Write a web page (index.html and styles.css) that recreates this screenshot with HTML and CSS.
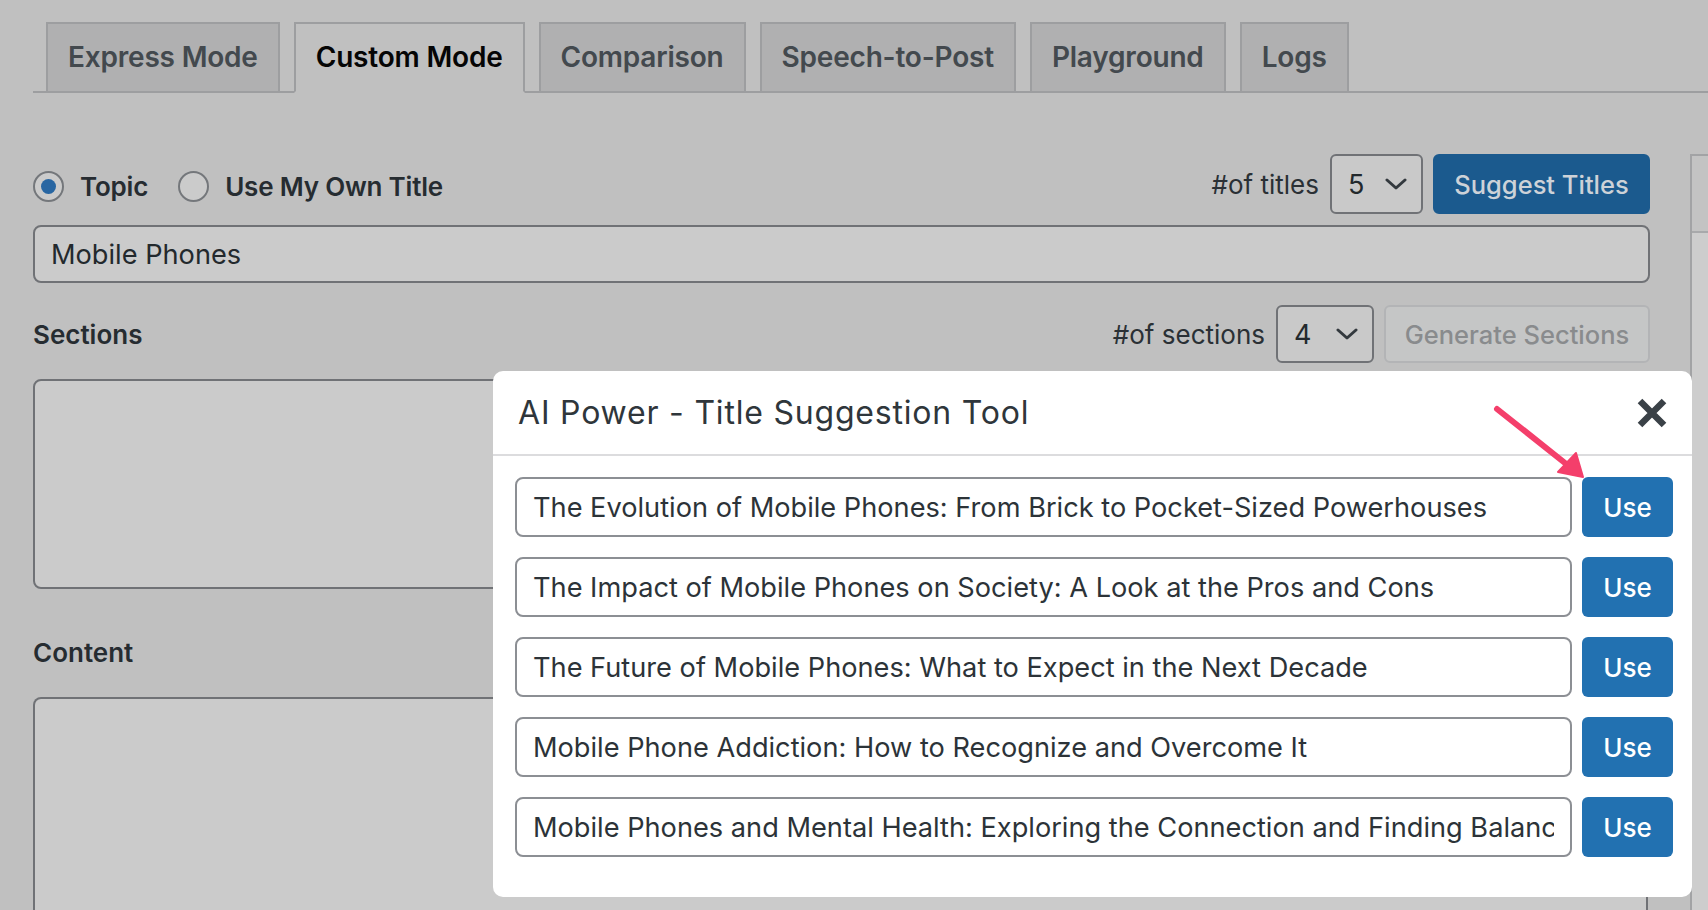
FILE: index.html
```html
<!DOCTYPE html>
<html lang="en">
<head>
<meta charset="utf-8">
<title>AI Power - Custom Mode</title>
<link rel="stylesheet" href="styles.css">
</head>
<body>
<nav class="tabs">
  <a class="tab">Express Mode</a>
  <a class="tab active">Custom Mode</a>
  <a class="tab">Comparison</a>
  <a class="tab">Speech-to-Post</a>
  <a class="tab">Playground</a>
  <a class="tab">Logs</a>
</nav>

<div class="layout">
  <main class="main">
    <div class="row row-title">
      <div class="radios">
        <label class="radio"><span class="radio-dot checked"></span>Topic</label>
        <label class="radio"><span class="radio-dot"></span>Use My Own Title</label>
      </div>
      <div class="controls">
        <span class="ctl-label">#of titles</span>
        <div class="select select-titles"><span>5</span><svg class="chev" viewBox="0 0 22 12" width="22" height="12"><polyline points="2,2 11,10 20,2" fill="none" stroke="#33393e" stroke-width="3" stroke-linecap="round" stroke-linejoin="round"/></svg></div>
        <button class="btn btn-primary btn-suggest">Suggest Titles</button>
      </div>
    </div>

    <div class="field topic-field"><span class="field-text">Mobile Phones</span></div>

    <div class="row row-sections">
      <h3 class="heading">Sections</h3>
      <div class="controls">
        <span class="ctl-label">#of sections</span>
        <div class="select select-sections"><span>4</span><svg class="chev" viewBox="0 0 22 12" width="22" height="12"><polyline points="2,2 11,10 20,2" fill="none" stroke="#33393e" stroke-width="3" stroke-linecap="round" stroke-linejoin="round"/></svg></div>
        <button class="btn btn-disabled btn-generate">Generate Sections</button>
      </div>
    </div>

    <div class="textarea sections-area"></div>

    <div class="row row-content">
      <h3 class="heading">Content</h3>
    </div>

    <div class="textarea content-area"></div>
  </main>

  <aside class="sidebar">
    <div class="sidebar-head"></div>
    <div class="sidebar-body"></div>
  </aside>
</div>

<div class="modal">
  <div class="modal-header">
    <h2 class="modal-title">AI Power - Title Suggestion Tool</h2>
    <svg class="close" viewBox="0 0 32 32" width="32" height="32"><path d="M4 4 L28 28 M28 4 L4 28" stroke="#3a4147" stroke-width="6.5" stroke-linecap="butt" fill="none"/></svg>
  </div>
  <div class="modal-body">
    <div class="title-row">
      <div class="field title-field"><span class="field-text">The Evolution of Mobile Phones: From Brick to Pocket-Sized Powerhouses</span></div>
      <button class="btn btn-use">Use</button>
    </div>
    <div class="title-row">
      <div class="field title-field"><span class="field-text">The Impact of Mobile Phones on Society: A Look at the Pros and Cons</span></div>
      <button class="btn btn-use">Use</button>
    </div>
    <div class="title-row">
      <div class="field title-field"><span class="field-text">The Future of Mobile Phones: What to Expect in the Next Decade</span></div>
      <button class="btn btn-use">Use</button>
    </div>
    <div class="title-row">
      <div class="field title-field"><span class="field-text">Mobile Phone Addiction: How to Recognize and Overcome It</span></div>
      <button class="btn btn-use">Use</button>
    </div>
    <div class="title-row">
      <div class="field title-field"><span class="field-text">Mobile Phones and Mental Health: Exploring the Connection and Finding Balance</span></div>
      <button class="btn btn-use">Use</button>
    </div>
  </div>
</div>

<svg class="arrow" viewBox="0 0 100 84" width="100" height="84">
  <line x1="7" y1="7" x2="80" y2="65" stroke="#f43f6b" stroke-width="6" stroke-linecap="round"/>
  <polygon points="93,75 68,70 86,51" fill="#f43f6b" stroke="#f43f6b" stroke-width="2" stroke-linejoin="round"/>
</svg>
</body>
</html>
```

FILE: styles.css
```css
* { box-sizing: border-box; }

html, body {
  margin: 0;
  padding: 0;
}

body {
  width: 1708px;
  height: 910px;
  overflow: hidden;
  background: #c0c0c0;
  font-family: Inter, "Noto Sans", "Liberation Sans", sans-serif;
  color: #23292d;
  position: relative;
}

/* ---------- tabs ---------- */
.tabs {
  display: flex;
  margin: 22px 0 0 33px;
  padding-left: 13px;
  border-bottom: 2px solid #9d9ea0;
  height: 71px;
}

.tab {
  display: flex;
  align-items: center;
  height: 69px;
  padding: 0 20px 2px;
  margin-right: 14px;
  background: #b0b0b1;
  border: 2px solid #9d9ea0;
  border-bottom: none;
  font-size: 28px;
  font-weight: 600;
  color: #43494e;
  letter-spacing: -0.2px;
}

.tab.active {
  background: #c0c0c0;
  color: #050505;
  height: 71px;
  border-bottom: 2px solid #c0c0c0;
}

/* ---------- layout ---------- */
.layout {
  display: flex;
  margin-top: 61px;
}

.main {
  width: 1617px;
  margin-left: 33px;
  flex-shrink: 0;
}

.sidebar {
  margin-left: 40px;
  width: 18px;
  flex-shrink: 0;
  border: 2px solid #a2a3a5;
  border-right: none;
  border-bottom: none;
  display: flex;
  flex-direction: column;
  height: 756px;
}

.sidebar-head {
  height: 77px;
  background: #c3c3c3;
  border-bottom: 2px solid #a8a9ab;
}

.sidebar-body {
  flex: 1;
  background: #cdcdcd;
}

/* ---------- rows ---------- */
.row {
  display: flex;
  align-items: center;
  justify-content: space-between;
}

.row-title { height: 60px; }
.row-sections { height: 58px; margin-top: 22px; }
.row-content { height: 58px; margin-top: 34px; }

.radios {
  display: flex;
  align-items: center;
  gap: 30px;
  padding-top: 4px;
}

.radio {
  display: flex;
  align-items: center;
  gap: 16px;
  font-size: 26px;
  font-weight: 600;
  color: #262c31;
  letter-spacing: -0.2px;
}

.radio-dot {
  width: 31px;
  height: 31px;
  border-radius: 50%;
  border: 2px solid #74777b;
  background: #cbcbcb;
  display: flex;
  align-items: center;
  justify-content: center;
}

.radio-dot.checked::after {
  content: "";
  width: 15px;
  height: 15px;
  border-radius: 50%;
  background: #2866a2;
}

.controls {
  display: flex;
  align-items: center;
  height: 100%;
}

.ctl-label {
  font-size: 26px;
  color: #2a3035;
  margin-right: 11px;
}

.select {
  height: 100%;
  display: flex;
  align-items: center;
  justify-content: space-between;
  padding: 0 14px 0 16px;
  border: 2px solid #707276;
  border-radius: 6px;
  background: #c9c9c9;
  font-size: 27px;
  color: #23292d;
  margin-right: 10px;
}

.select-titles { width: 93px; }
.select-sections { width: 98px; }

.chev { display: block; }

.btn {
  font-family: inherit;
  font-size: 25.5px;
  border-radius: 6px;
  cursor: pointer;
  display: flex;
  align-items: center;
  justify-content: center;
  padding: 0;
  flex-shrink: 0;
}

.btn-primary {
  height: 100%;
  width: 217px;
  background: #1b5a8e;
  border: 2px solid #1b5a8e;
  color: #cdd2d8;
  font-weight: 500;
}

.btn-disabled {
  height: 100%;
  width: 266px;
  background: #c5c6c6;
  border: 2px solid #b3b4b6;
  color: #898b8d;
  font-weight: 500;
}

.heading {
  margin: 0;
  font-size: 26px;
  font-weight: 600;
  color: #262c31;
}

/* ---------- fields ---------- */
.field {
  display: flex;
  align-items: center;
  border: 2px solid #707276;
  border-radius: 8px;
  padding: 0 16px;
  font-size: 27.2px;
  min-width: 0;
}

.field-text {
  display: block;
  overflow: hidden;
  white-space: nowrap;
  width: 100%;
  min-width: 0;
}

.topic-field {
  margin-top: 11px;
  height: 58px;
  background: #cbcbcb;
  color: #23292d;
}

.textarea {
  border: 2px solid #707276;
  border-radius: 8px;
  background: #cbcbcb;
  width: 1615px;
}

.sections-area {
  margin-top: 16px;
  height: 210px;
}

.content-area {
  margin-top: 16px;
  height: 213px;
  border-bottom: none;
  border-bottom-left-radius: 0;
  border-bottom-right-radius: 0;
}

/* ---------- modal ---------- */
.modal {
  position: absolute;
  left: 493px;
  top: 371px;
  width: 1199px;
  height: 526px;
  background: #ffffff;
  border-radius: 10px;
  display: flex;
  flex-direction: column;
}

.modal-header {
  height: 85px;
  border-bottom: 2px solid #dcdcde;
  display: flex;
  align-items: center;
  justify-content: space-between;
  padding: 0 24px 0 25px;
}

.modal-title {
  margin: 0;
  font-size: 32px;
  font-weight: 400;
  color: #2f363b;
  letter-spacing: 0.8px;
}

.close { display: block; }

.modal-body {
  padding: 21px 19px 0 22px;
  display: flex;
  flex-direction: column;
  gap: 20px;
}

.title-row {
  display: flex;
  gap: 10px;
  height: 60px;
}

.title-field {
  flex: 1 1 0;
  background: #ffffff;
  border-color: #8c8f94;
  color: #2c3338;
}

.btn-use {
  width: 91px;
  height: 60px;
  background: #2271b1;
  border: none;
  color: #ffffff;
  font-size: 26px;
  font-weight: 500;
}

/* ---------- annotation arrow ---------- */
.arrow {
  position: absolute;
  left: 1490px;
  top: 402px;
}
```
